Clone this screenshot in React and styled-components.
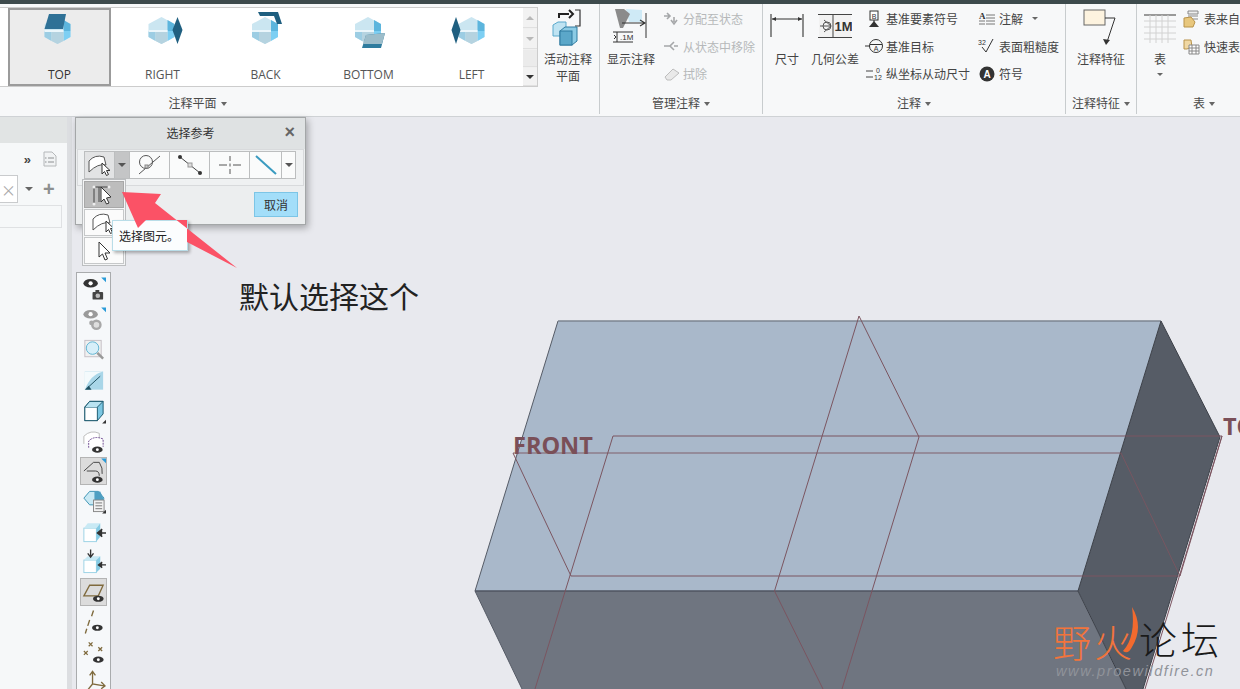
import React from 'react';
import styled, { createGlobalStyle } from 'styled-components';

const GlobalStyle = createGlobalStyle`
  html, body { margin: 0; padding: 0; background: #e8e9ee; }
  body { font-family: "Noto Sans CJK SC", "Open Sans", sans-serif; font-size: 12px; color: #444; }
`;

const Page = styled.div`
  width: 1240px;
  height: 689px;
  overflow: hidden;
  display: flex;
  flex-direction: column;
`;
const TopBar = styled.div`
  height: 4px;
  background: #3d4a4c;
  flex-shrink: 0;
`;
const Ribbon = styled.div`
  height: 112px;
  flex-shrink: 0;
  display: flex;
  background: #f7f8f9;
  border-bottom: 1px solid #cfd2d5;
`;
const Group = styled.div`
  width: ${p => p.$w}px;
  flex-shrink: 0;
  padding-top: 1px;
  margin-bottom: 2px;
  display: flex;
  flex-direction: column;
  box-sizing: border-box;
  border-right: ${p => (p.$last ? 'none' : '1px solid #c8ccce')};
`;
const GroupBody = styled.div`
  height: 88px;
  display: flex;
`;
const GroupLabel = styled.div`
  height: 16px;
  line-height: 16px;
  margin-top: 2px;
  text-align: center;
  padding-right: ${p => p.$pr || 0}px;
  white-space: nowrap;
  font-size: 12px;
  color: #4a4a4a;
  &::after {
    content: '';
    display: inline-block;
    margin-left: 4px;
    vertical-align: 2px;
    border: 3.5px solid transparent;
    border-top: 4px solid #666;
    border-bottom: 0;
  }
`;
const Gallery = styled.div`
  width: 538px;
  height: 80px;
  margin-top: 2px;
  box-sizing: border-box;
  background: #fff;
  border: 1px solid #ccc;
  border-left: 0;
  padding-left: 8px;
  display: flex;
`;
const GalleryItem = styled.div`
  width: 103px;
  flex-shrink: 0;
  box-sizing: border-box;
  display: flex;
  flex-direction: column;
  align-items: center;
  font-family: "Open Sans", sans-serif;
  font-size: 12px;
  color: ${p => (p.$on ? '#333' : '#555')};
  background: ${p => (p.$on ? '#ececec' : 'transparent')};
  border: 2px solid ${p => (p.$on ? '#9b9b9b' : 'transparent')};
  span { margin-top: auto; padding-bottom: 1px; }
`;
const ScrollCol = styled.div`
  width: 14px;
  display: flex;
  flex-direction: column;
  gap: 1px;
  background: #f0f0f0;
`;
const ScrollBtn = styled.div`
  height: ${p => p.$h}px;
  flex-grow: ${p => (p.$grow ? 1 : 0)};
  display: flex;
  align-items: center;
  justify-content: center;
  background: ${p => (p.$grow ? '#ebebeb' : '#f2f2f2')};
  border-bottom: 1px solid #e0e0e0;
`;
const Tri = styled.i`
  width: 0;
  height: 0;
  display: block;
  margin-left: ${p => p.$ml || 0}px;
  margin-top: ${p => p.$mt || 0}px;
  border-left: ${p => p.$s || 4}px solid transparent;
  border-right: ${p => p.$s || 4}px solid transparent;
  border-top: ${p => (p.$up ? 0 : (p.$s || 4) + 'px solid ' + (p.$c || '#666'))};
  border-bottom: ${p => (p.$up ? (p.$s || 4) + 'px solid ' + (p.$c || '#666') : 0)};
`;
const BigButton = styled.div`
  width: ${p => p.$w}px;
  margin-left: ${p => p.$ml || 0}px;
  flex-shrink: 0;
  display: flex;
  flex-direction: column;
  align-items: center;
  text-align: center;
  line-height: 17px;
  padding-top: 2px;
  white-space: nowrap;
`;
const IconBox = styled.div`
  height: 43px;
  box-sizing: border-box;
  padding-top: ${p => p.$pt || 0}px;
  display: flex;
  align-items: flex-start;
  justify-content: center;
`;
const SmallCol = styled.div`
  width: ${p => p.$w}px;
  margin-left: ${p => p.$ml || 0}px;
  flex-shrink: 0;
  display: flex;
  flex-direction: column;
`;
const SmallRow = styled.div`
  height: 27.5px;
  display: flex;
  align-items: center;
  gap: 3px;
  white-space: nowrap;
  color: ${p => (p.$off ? '#b6b8ba' : '#444')};
`;
const RowIcon = styled.svg`
  width: 18px;
  height: 18px;
  flex-shrink: 0;
`;
const Workspace = styled.div`
  flex: 1;
  position: relative;
  display: flex;
  background: #e8e9ee;
  min-height: 0;
`;
const LeftPanel = styled.div`
  width: 67px;
  flex-shrink: 0;
  background: #f6f8f9;
  border-right: 5px solid #dcdee1;
  display: flex;
  flex-direction: column;
`;
const PanelHead = styled.div`
  height: 26px;
  background: #e1e4e4;
`;
const PanelTabs = styled.div`
  height: 32px;
  display: flex;
  align-items: center;
  justify-content: flex-end;
  gap: 12px;
  padding-right: 10px;
  font: bold 13px "Liberation Sans", sans-serif;
`;
const SearchRow = styled.div`
  height: 28px;
  display: flex;
  align-items: center;
`;
const SearchBox = styled.div`
  width: 18px;
  height: 28px;
  box-sizing: border-box;
  background: #fff;
  border: 1px solid #c9cbcd;
  border-left: 0;
  display: flex;
  align-items: center;
  justify-content: center;
  color: #aaa;
  font-size: 15px;
`;
const PlusMark = styled.span`
  margin-left: 10px;
  color: #8d8f90;
  font: bold 20px "Liberation Sans", sans-serif;
  line-height: 1;
`;
const SearchBelow = styled.div`
  width: 62px;
  height: 23px;
  margin-top: 2px;
  box-sizing: border-box;
  border: 1px solid #dfe1e3;
  border-left: 0;
`;
const ToolColumn = styled.div`
  width: 35px;
  margin: 155px 0 0 4px;
  flex-shrink: 0;
  box-sizing: border-box;
  background: #f6f8fa;
  border: 1px solid #a9abad;
  border-bottom: 0;
  padding-top: 2px;
  display: flex;
  flex-direction: column;
  align-items: center;
  position: relative;
  z-index: 1;
`;
const ToolItem = styled.div`
  width: 27px;
  height: ${p => (p.$on ? 28 : 30.2)}px;
  margin: ${p => (p.$on ? '1.1px 0' : 0)};
  box-sizing: border-box;
  flex-shrink: 0;
  display: flex;
  align-items: center;
  justify-content: center;
  background: ${p => (p.$on ? '#dcdcdc' : 'transparent')};
  border: 1px solid ${p => (p.$on ? '#b4b4b4' : 'transparent')};
`;
const ModelLayer = styled.svg`
  position: absolute;
  left: 0;
  top: 0;
  width: 1240px;
  height: 572px;
`;
const DatumLabel = styled.span`
  position: absolute;
  left: ${p => p.$x}px;
  top: ${p => p.$y}px;
  font: bold 23.5px/26px "Open Sans", sans-serif;
  color: #7a4f58;
`;
const Dialog = styled.div`
  position: absolute;
  left: 75px;
  top: 0;
  width: 231px;
  height: 108px;
  box-sizing: border-box;
  background: #eceeef;
  border: 1px solid #a4a7a8;
  box-shadow: 2px 3px 7px rgba(0, 0, 0, 0.3);
  display: flex;
  flex-direction: column;
  z-index: 3;
`;
const DialogHead = styled.div`
  height: 31px;
  flex-shrink: 0;
  box-sizing: border-box;
  padding-bottom: 2px;
  background: #dfe2e3;
  display: flex;
  align-items: center;
  justify-content: center;
  position: relative;
  font-size: 12px;
  color: #333;
  b {
    position: absolute;
    right: 10px;
    top: 4px;
    font: bold 18px/20px "Liberation Sans", sans-serif;
    color: #666;
  }
`;
const SelectBar = styled.div`
  height: 37px;
  flex-shrink: 0;
  margin: 0 1px;
  box-sizing: border-box;
  padding: 1px 0 0 6px;
  background: #eff1f2;
  border: 1px solid #d8dadc;
  display: flex;
`;
const SelectBtn = styled.div`
  width: ${p => p.$w}px;
  height: 28px;
  box-sizing: border-box;
  flex-shrink: 0;
  display: flex;
  align-items: center;
  justify-content: center;
  background: ${p => p.$bg || '#fafbfb'};
  border: 1px solid #bcbebf;
  border-left-width: ${p => (p.$joined ? 0 : 1)}px;
`;
const DialogFoot = styled.div`
  flex: 1;
  display: flex;
  justify-content: flex-end;
  align-items: flex-start;
  padding: 6px 7px 0 0;
`;
const CancelBtn = styled.div`
  width: 44px;
  height: 25px;
  box-sizing: border-box;
  background: #a3def9;
  border: 1px solid #7cc5e6;
  display: flex;
  align-items: center;
  justify-content: center;
  color: #333;
`;
const Flyout = styled.div`
  position: absolute;
  left: 82px;
  top: 62px;
  width: 44px;
  height: 87px;
  box-sizing: border-box;
  padding: 1px;
  background: #f4f5f6;
  border: 1px solid #bcbec0;
  display: flex;
  flex-direction: column;
  gap: 1px;
  z-index: 4;
`;
const FlyoutItem = styled.div`
  height: 27.3px;
  display: flex;
  align-items: center;
  justify-content: center;
  background: ${p => (p.$on ? '#bdbdbd' : '#fbfbfb')};
  border: 1px solid ${p => (p.$on ? '#a8a8a8' : '#c6c8c9')};
  box-sizing: border-box;
`;
const Tooltip = styled.div`
  position: absolute;
  left: 112px;
  top: 103px;
  width: 76px;
  height: 31px;
  box-sizing: border-box;
  padding-left: 6px;
  line-height: 29px;
  background: #fbfdfe;
  border: 1px solid #b9dde8;
  box-shadow: 2px 2px 3px rgba(0, 0, 0, 0.3);
  white-space: nowrap;
  color: #222;
  z-index: 5;
`;
const ArrowLayer = styled.svg`
  position: absolute;
  left: 100px;
  top: 60px;
  width: 150px;
  height: 100px;
  z-index: 6;
`;
const Callout = styled.div`
  position: absolute;
  left: 239px;
  top: 157px;
  font-size: 30px;
  line-height: 42px;
  color: #222;
  white-space: nowrap;
`;
const Watermark = styled.div`
  position: absolute;
  left: 1054px;
  top: 488px;
  width: 180px;
  height: 84px;
  z-index: 2;
`;
const FlameIcon = styled.svg`
  position: absolute;
  left: 60px;
  top: 0;
`;
const MarkText = styled.span`
  position: absolute;
  left: ${p => p.$x}px;
  top: ${p => p.$y}px;
  font: 300 ${p => p.$size}px/${p => p.$size + 4}px "Noto Sans CJK SC", sans-serif;
  letter-spacing: ${p => p.$ls || 0}px;
  color: ${p => p.$c};
  white-space: nowrap;
`;
const MarkUrl = styled.span`
  position: absolute;
  left: 2px;
  top: 57px;
  font: italic 14.5px/18px "Liberation Sans", sans-serif;
  letter-spacing: 1.6px;
  color: #90939a;
  white-space: nowrap;
`;

function Cube({ kind }) {
  const ox = { top: 8.5, right: 9.5, back: 10, bottom: 10, left: 10.5 }[kind];
  return (
    <svg width='48' height='40' viewBox='0 0 48 40'>
      <g transform={`translate(${ox} 0)`}>
        <polygon points='13,7 26,14 26,27 13,34 0,27 0,14' fill='#cbe6f1' />
        <polygon points='19,10 26,14 26,21 19,21' fill='#5cb5dd' />
        <polygon points='19,21 26,21 26,27 19,31' fill='#7dcff3' />
        <polygon points='0,21 7,21 7,31 0,27' fill='#9ccde3' />
        <polygon points='7,22 19,22 19,31 13,34 7,31' fill='#b5d3e0' />
        <rect x='0' y='20' width='19' height='2' fill='#eaf6fb' />
      </g>
      {kind === 'top' && <polygon points='13,4 30,4 27,19 8.5,19' fill='#2f7196' />}
      {kind === 'right' && <polygon points='38.5,7 43.5,20 38.5,34 33.5,20' fill='#1f5f80' />}
      {kind === 'back' && <polygon points='16,2 36,2 40,14 35,14 32,6 18,6' fill='#1f5f80' />}
      {kind === 'bottom' && <polygon points='21,25 40,23 36,38 17,38' fill='#2f7c9e' />}
      {kind === 'bottom' && <polygon points='21,25 40,23 37,34 18,34' fill='#9dbdca' />}
      {kind === 'left' && <polygon points='8,7 12.5,20 8,34 3.5,20' fill='#1f5f80' />}
    </svg>
  );
}

function ActivePlaneIcon() {
  return (
    <svg width='36' height='38' viewBox='0 0 36 38'>
      <path d='M9 9 V5 H19 M19 1 L23 5 L19 9' fill='none' stroke='#222' strokeWidth='2' />
      <path d='M25 1 H30 V17 H25' fill='none' stroke='#333' strokeWidth='1.2' />
      <polygon points='3,16 8,13 16,13 16,27 8,27 3,27' fill='#bfe3f2' stroke='#5aa9cc' />
      <polygon points='10,22 15,18 27,18 27,32 22,36 10,36' fill='#8ccbe4' stroke='#2f7ba0' />
      <rect x='10' y='22' width='12' height='14' fill='#5ba7c9' stroke='#2f7ba0' />
    </svg>
  );
}

function ShowNoteIcon() {
  return (
    <svg width='38' height='36' viewBox='0 0 38 36'>
      <polygon points='14,1 30,2 30,14 17,14' fill='#cfeaf6' />
      <polygon points='3,1 12,1 18,6 11,20 8,20' fill='#8b8b8b' />
      <path d='M10 15 H32 M28 12 L33 15 L28 18' fill='none' stroke='#333' strokeWidth='1.1' />
      <path d='M34 5 V30' stroke='#333' strokeWidth='1' />
      <path d='M1 24 H21 M1 34 H21 M5 24 V34' fill='none' stroke='#333' />
      <path d='M2 27 L4 29 L2 31' fill='none' stroke='#333' />
      <text x='8' y='32' fontSize='8' fill='#333' fontFamily='Liberation Sans'>.1M</text>
    </svg>
  );
}

function DimensionIcon() {
  return (
    <svg width='34' height='24' viewBox='0 0 34 24'>
      <path d='M1 1 V24 M33 1 V24 M2 6 H32' fill='none' stroke='#333' strokeWidth='1.1' />
      <path d='M2 6 L6 4 V8 Z M32 6 L28 4 V8 Z' fill='#333' />
    </svg>
  );
}

function GdtIcon() {
  return (
    <svg width='34' height='26' viewBox='0 0 34 26'>
      <rect x='1' y='2' width='32' height='22' fill='#f2f2f2' />
      <path d='M0 1.5 H34 M0 24.5 H34 M15 2 V24' stroke='#444' />
      <path d='M2 13 H13 M6 7 L13 13 L6 19' fill='none' stroke='#555' />
      <circle cx='9' cy='13' r='4' fill='none' stroke='#555' />
      <text x='16.5' y='18' fontSize='13' fill='#333' fontWeight='bold' fontFamily='Liberation Sans'>1M</text>
    </svg>
  );
}

function FeatureIcon() {
  return (
    <svg width='36' height='38' viewBox='0 0 36 38'>
      <rect x='1' y='1' width='21' height='15' fill='#fdf3df' stroke='#666' />
      <path d='M22 9 H32 L24 33' fill='none' stroke='#333' />
      <path d='M20 30 L23 36 L27 31 Z' fill='#333' />
    </svg>
  );
}

function TableIcon() {
  const v = [6, 12, 18, 24];
  const h = [8, 14, 20, 26];
  return (
    <svg width='32' height='34' viewBox='0 0 32 34'>
      <path d='M0 2 H32' stroke='#999' strokeWidth='2' />
      {h.map(y => <path key={y} d={`M0 ${y} H32`} stroke='#d2d2d2' />)}
      {v.map(x => <path key={x} d={`M${x} 2 V30`} stroke='#d2d2d2' />)}
    </svg>
  );
}

function RowGlyph({ name }) {
  const box = { viewBox: '0 0 18 18' };
  if (name === 'assign' || name === 'remove') {
    return (
      <RowIcon {...box}>
        <path d={name === 'assign' ? 'M2 6 H7 M5 3 L8 6 L5 9 M12 7 V12 M9 10 L12 14 L15 10' : 'M2 9 H8 M16 9 H12 M12 5 L8 9 L12 13'} fill='none' stroke='#a5a7a9' strokeWidth='1.6' />
      </RowIcon>
    );
  }
  if (name === 'erase') {
    return (
      <RowIcon {...box}>
        <polygon points='3,12 11,4 17,8 9,15 5,15' fill='#e9e9e9' stroke='#bdbdbd' />
      </RowIcon>
    );
  }
  if (name === 'datum') {
    return (
      <RowIcon {...box}>
        <rect x='5' y='1' width='8' height='9' fill='#fff' stroke='#333' />
        <text x='9' y='8.5' fontSize='7' textAnchor='middle' fill='#333' fontFamily='Liberation Sans'>B</text>
        <path d='M9 10 V12' stroke='#333' />
        <polygon points='4,17 14,17 9,11' fill='#333' />
      </RowIcon>
    );
  }
  if (name === 'target') {
    return (
      <RowIcon {...box}>
        <path d='M0 9 H5' stroke='#333' />
        <circle cx='11' cy='9' r='6.5' fill='none' stroke='#333' />
        <path d='M5 7.5 H17' stroke='#333' />
        <text x='11' y='14' fontSize='7' textAnchor='middle' fill='#333' fontFamily='Liberation Sans'>A</text>
      </RowIcon>
    );
  }
  if (name === 'ordinate') {
    return (
      <RowIcon {...box}>
        <path d='M1 6 H8 M1 12 H8' stroke='#444' />
        <text x='13' y='8' fontSize='7' textAnchor='middle' fill='#333' fontFamily='Liberation Sans'>0</text>
        <text x='13' y='15' fontSize='7' textAnchor='middle' fill='#333' fontFamily='Liberation Sans'>12</text>
      </RowIcon>
    );
  }
  if (name === 'note') {
    return (
      <RowIcon {...box}>
        <text x='1' y='9' fontSize='9' fill='#333' fontWeight='bold' fontFamily='Liberation Serif'>A</text>
        <path d='M8 5 H17 M8 8 H17 M8 11 H17 M8 14 H17 M1 11 H7 M1 14 H7' stroke='#777' />
      </RowIcon>
    );
  }
  if (name === 'rough') {
    return (
      <RowIcon {...box}>
        <text x='0' y='8' fontSize='7' fill='#333' fontFamily='Liberation Sans'>32</text>
        <path d='M4 10 L8 15 L15 2' fill='none' stroke='#333' />
      </RowIcon>
    );
  }
  if (name === 'symbol') {
    return (
      <RowIcon {...box}>
        <circle cx='9' cy='9' r='7.5' fill='#333' />
        <text x='9' y='13' fontSize='10' textAnchor='middle' fill='#fff' fontWeight='bold' fontFamily='Liberation Sans'>A</text>
      </RowIcon>
    );
  }
  if (name === 'fromfile') {
    return (
      <RowIcon {...box}>
        <path d='M5 1 H15 V4 H5 Z M5 6 H15 M5 9 H15' fill='#eee' stroke='#888' />
        <polygon points='1,8 8,7 12,12 10,17 1,17' fill='#e8c77d' stroke='#b8934a' />
      </RowIcon>
    );
  }
  return (
    <RowIcon {...box}>
      <polygon points='1,3 8,3 9,10 4,12 1,12' fill='#f0d8a4' stroke='#b8934a' />
      <path d='M6 8 H16 V17 H6 Z M6 11 H16 M6 14 H16 M9 8 V17 M13 8 V17' fill='#fff' stroke='#888' />
    </RowIcon>
  );
}

function Eye({ x, y, c = '#333', big }) {
  return (
    <g transform={`translate(${x} ${y})`}>
      <ellipse cx='0' cy='0' rx={big ? 7.5 : 5.5} ry={big ? 4.5 : 3.2} fill={c} />
      <circle cx='0' cy='0' r={big ? 2.2 : 1.5} fill='#fff' />
    </g>
  );
}

function ToolGlyph({ name }) {
  return (
    <svg width='26' height='26' viewBox='0 0 26 26'>
      {name === 'viewA' && (
        <>
          <path d='M21 0 H26 V5 Z' fill='#2a9bd8' />
          <Eye x={10} y={6} c='#333' big />
          <rect x='12' y='15' width='11' height='8' rx='1' fill='#444' />
          <circle cx='17.5' cy='19' r='2.4' fill='#bbb' />
          <rect x='15' y='13' width='4' height='3' fill='#444' />
        </>
      )}
      {name === 'viewB' && (
        <>
          <path d='M21 0 H26 V5 Z' fill='#2a9bd8' />
          <Eye x={10} y={7} c='#9a9a9a' big />
          <circle cx='16' cy='18' r='5.5' fill='#a8a8a8' />
          <circle cx='16' cy='18' r='3' fill='#dedede' />
          <circle cx='11' cy='16' r='2.5' fill='#a8a8a8' />
        </>
      )}
      {name === 'zoom' && (
        <>
          <rect x='4' y='3' width='17' height='17' fill='#f0f0f0' stroke='#c5bfc5' />
          <circle cx='12' cy='11' r='6.5' fill='#d7eff9' stroke='#5fb4d2' />
          <path d='M17 16 L23 22' stroke='#999' strokeWidth='2.6' />
        </>
      )}
      {name === 'slope' && (
        <>
          <rect x='4' y='3' width='19' height='19' fill='#a9d6e8' />
          <path d='M4 22 V3 H23 Q10 6 4 22 Z' fill='#f4fafc' />
          <path d='M8 19 L20 8' stroke='#1d4f60' strokeWidth='1' />
          <polygon points='4,22 11,22 8,18' fill='#1d4f60' />
        </>
      )}
      {name === 'cube' && (
        <>
          <polygon points='4,9 9,3 23,3 23,16 17,23 4,23' fill='#7cc7e2' stroke='#1c5a6e' />
          <rect x='4' y='9' width='13' height='14' fill='#fff' stroke='#1c5a6e' />
          <path d='M4 9 L9 3 H23 L17 9' fill='#b9e3f1' stroke='#1c5a6e' />
          <path d='M26 22 V26 H22 Z' fill='#333' />
        </>
      )}
      {name === 'section' && (
        <>
          <path d='M3 16 V8 Q10 1 19 5 V10' fill='#fff' stroke='#bbb' />
          <path d='M8 20 V13 Q14 7 23 11 V19' fill='#fff' stroke='#6d4a92' strokeDasharray='2 1' />
          <Eye x={17} y={22} />
        </>
      )}
      {name === 'sectionOn' && (
        <>
          <path d='M21 0 H26 V5 Z' fill='#2a9bd8' />
          <path d='M3 13 L13 4 H19 Q23 10 22 16 M6 13 H15 Q19 13 19 18' fill='none' stroke='#444' />
          <Eye x={17} y={22} />
        </>
      )}
      {name === 'cubeNote' && (
        <>
          <polygon points='3,10 9,3 18,3 24,10 18,17 9,17' fill='#c9e9f4' stroke='#3d93b3' />
          <path d='M14 3 L20 3 L24 12 H14 Z' fill='#4e9fc2' />
          <rect x='13' y='12' width='11' height='12' fill='#f2f2f2' stroke='#888' />
          <path d='M15 15 H22 M15 18 H22 M15 21 H22' stroke='#777' />
          <path d='M26 22 V26 H22 Z' fill='#333' />
        </>
      )}
      {name === 'cubeLeft' && (
        <>
          <rect x='3' y='9' width='13' height='14' fill='#fff' stroke='#9bd2e5' />
          <polygon points='3,9 7,4 20,4 16,9' fill='#c8e9f4' />
          <polygon points='16,9 20,4 20,18 16,23' fill='#86cbe4' />
          <path d='M26 14 H18 M22 10 L17 14 L22 18' fill='#333' stroke='#333' strokeWidth='1.4' />
        </>
      )}
      {name === 'cubeDown' && (
        <>
          <rect x='3' y='11' width='13' height='13' fill='#fff' stroke='#9bd2e5' />
          <polygon points='3,11 7,7 20,7 16,11' fill='#c8e9f4' />
          <polygon points='16,11 20,7 20,20 16,24' fill='#86cbe4' />
          <path d='M10 0 V7 M7 4 L10 8 L13 4' fill='none' stroke='#333' strokeWidth='1.4' />
          <path d='M26 16 H19 M22 13 L18 16 L22 19' fill='#333' stroke='#333' strokeWidth='1.2' />
        </>
      )}
      {name === 'plane' && (
        <>
          <polygon points='3,17 9,6 23,6 18,17' fill='none' stroke='#7f6a3d' strokeWidth='1.4' />
          <Eye x={18} y={20} />
        </>
      )}
      {name === 'axis' && (
        <>
          <path d='M13 1 L11 7 M9 11 L7 17 M6 20 L4.5 25' stroke='#7f6a3d' strokeWidth='1.4' />
          <Eye x={17} y={19} />
        </>
      )}
      {name === 'points' && (
        <>
          <path d='M8 3 L12 7 M12 3 L8 7 M18 8 L22 12 M22 8 L18 12 M3 12 L7 16 M7 12 L3 16' stroke='#7f6a3d' strokeWidth='1.3' />
          <Eye x={18} y={21} />
        </>
      )}
      {name === 'csys' && (
        <>
          <path d='M12 2 V14 L24 16 M12 14 L4 24 M9 5 L12 1 L15 5 M21 12 L25 16 L21 19' fill='none' stroke='#7f6a3d' strokeWidth='1.4' />
          <Eye x={18} y={24} />
        </>
      )}
    </svg>
  );
}

function DialogSurf({ hand = true }) {
  return (
    <svg width='24' height='22' viewBox='0 0 24 22'>
      <path d='M1 18 V7 Q7 0 16 3 L18 11 Q10 9 1 18 Z' fill='#fff' stroke='#555' />
      {hand && <path d='M14 9 V20 L16.5 17.5 L18.5 21.5 L20.5 20.5 L18.5 16.5 L22 16.5 Z' fill='#fff' stroke='#333' />}
    </svg>
  );
}

function Pointer() {
  return (
    <svg width='16' height='20' viewBox='0 0 16 20'>
      <path d='M3 1 V16 L6.5 13 L9 19 L11.5 18 L9 12 L14 12 Z' fill='#fff' stroke='#333' />
    </svg>
  );
}

const tools = ['viewA', 'viewB', 'zoom', 'slope', 'cube', 'section', 'sectionOn', 'cubeNote', 'cubeLeft', 'cubeDown', 'plane', 'axis', 'points', 'csys'];
const active = ['sectionOn', 'plane'];
const planes = [['top', 'TOP'], ['right', 'RIGHT'], ['back', 'BACK'], ['bottom', 'BOTTOM'], ['left', 'LEFT']];

function Model() {
  return (
    <ModelLayer viewBox='0 117 1240 572'>
      <polygon points='558,321 1161,321 1078,591 475,591' fill='#a9b8ca' />
      <polygon points='1161,321 1220,437 1143,689 1126,689 1078,591' fill='#565c66' />
      <polygon points='475,591 1078,591 1126,689 522,689' fill='#6f7580' />
      <polyline points='558,321 475,591 522,689' fill='none' stroke='#555b66' />
      <path d='M558 321 H1161' stroke='#7d8490' strokeWidth='1.5' />
      <path d='M475 591 H1078' stroke='#4f5560' strokeWidth='1.5' />
      <polyline points='1161,321 1078,591 1126,689' fill='none' stroke='#3c4048' />
      <polyline points='1161,321 1220,437 1143,689' fill='none' stroke='#3c4048' />
      <g fill='none' stroke='#7b5560' strokeWidth='1'>
        <polyline points='823,689 774.5,591 859,316 919,437 842,689' />
        <polyline points='513,453 1121,453 1180,576' opacity='0.9' />
        <polyline points='513,453 571,576 1180,576' />
        <polyline points='535,689 613,436 1222,436 1145,689' />
        <path d='M1222 436 L1180 576' />
      </g>
    </ModelLayer>
  );
}

export default function App() {
  return (
    <Page>
      <GlobalStyle />
      <TopBar />
      <Ribbon>
        <Group $w={600}>
          <GroupBody>
            <Gallery>
              {planes.map(([kind, text], i) => (
                <GalleryItem key={kind} $on={i === 0}>
                  <Cube kind={kind} />
                  <span>{text}</span>
                </GalleryItem>
              ))}
              <ScrollCol>
                <ScrollBtn $h={19}><Tri $up $s={4} $c='#b8b8b8' /></ScrollBtn>
                <ScrollBtn $h={19}><Tri $s={4} $c='#b8b8b8' /></ScrollBtn>
                <ScrollBtn $grow />
                <ScrollBtn $h={17}><Tri $s={4} $c='#333' /></ScrollBtn>
              </ScrollCol>
            </Gallery>
            <BigButton $w={60}>
              <IconBox $pt={2}><ActivePlaneIcon /></IconBox>
              活动注释<br />平面
            </BigButton>
          </GroupBody>
          <GroupLabel $pr={204}>注释平面</GroupLabel>
        </Group>
        <Group $w={163}>
          <GroupBody>
            <BigButton $w={54} $ml={4}>
              <IconBox $pt={1}><ShowNoteIcon /></IconBox>
              显示注释
            </BigButton>
            <SmallCol $w={100} $ml={4}>
              <SmallRow $off><RowGlyph name='assign' />分配至状态</SmallRow>
              <SmallRow $off><RowGlyph name='remove' />从状态中移除</SmallRow>
              <SmallRow $off><RowGlyph name='erase' />拭除</SmallRow>
            </SmallCol>
          </GroupBody>
          <GroupLabel>管理注释</GroupLabel>
        </Group>
        <Group $w={303}>
          <GroupBody>
            <BigButton $w={48}>
              <IconBox $pt={6}><DimensionIcon /></IconBox>
              尺寸
            </BigButton>
            <BigButton $w={48}>
              <IconBox $pt={6}><GdtIcon /></IconBox>
              几何公差
            </BigButton>
            <SmallCol $w={113} $ml={6}>
              <SmallRow><RowGlyph name='datum' />基准要素符号</SmallRow>
              <SmallRow><RowGlyph name='target' />基准目标</SmallRow>
              <SmallRow><RowGlyph name='ordinate' />纵坐标从动尺寸</SmallRow>
            </SmallCol>
            <SmallCol $w={84}>
              <SmallRow><RowGlyph name='note' />注解<Tri $s={3.5} $ml={6} /></SmallRow>
              <SmallRow><RowGlyph name='rough' />表面粗糙度</SmallRow>
              <SmallRow><RowGlyph name='symbol' />符号</SmallRow>
            </SmallCol>
          </GroupBody>
          <GroupLabel>注释</GroupLabel>
        </Group>
        <Group $w={71}>
          <GroupBody>
            <BigButton $w={70}>
              <IconBox $pt={2}><FeatureIcon /></IconBox>
              注释特征
            </BigButton>
          </GroupBody>
          <GroupLabel>注释特征</GroupLabel>
        </Group>
        <Group $w={134} $last>
          <GroupBody>
            <BigButton $w={46}>
              <IconBox $pt={6}><TableIcon /></IconBox>
              表
              <Tri $s={3.5} $mt={6} />
            </BigButton>
            <SmallCol $w={88}>
              <SmallRow><RowGlyph name='fromfile' />表来自文件</SmallRow>
              <SmallRow><RowGlyph name='quick' />快速表</SmallRow>
            </SmallCol>
          </GroupBody>
          <GroupLabel>表</GroupLabel>
        </Group>
      </Ribbon>
      <Workspace>
        <Model />
        <LeftPanel>
          <PanelHead />
          <PanelTabs>
            <span>»</span>
            <svg width='14' height='17' viewBox='0 0 14 17'>
              <path d='M1 1 H9 L13 5 V15 H1 Z' fill='#f1f3f4' stroke='#b5b8ba' />
              <path d='M5 7 H11 M5 11 H11 M2 7 H3.5 M2 11 H3.5' stroke='#8d9092' />
            </svg>
          </PanelTabs>
          <SearchRow>
            <SearchBox>×</SearchBox>
            <Tri $s={4} $ml={7} />
            <PlusMark>+</PlusMark>
          </SearchRow>
          <SearchBelow />
        </LeftPanel>
        <ToolColumn>
          {tools.map(t => (
            <ToolItem key={t} $on={active.includes(t)}><ToolGlyph name={t} /></ToolItem>
          ))}
        </ToolColumn>
        <DatumLabel $x={513} $y={315}>FRONT</DatumLabel>
        <DatumLabel $x={1223} $y={296}>TOP</DatumLabel>
        <Watermark>
          <FlameIcon width='30' height='60' viewBox='0 0 30 60'>
            <path d='M18 2 Q30 22 18 42 Q14 50 9 46 Q22 32 18 2 Z' fill='#f26a2e' />
          </FlameIcon>
          <MarkText $x={-1} $y={15} $size={38} $c='#f2743c'>野</MarkText>
          <MarkText $x={40} $y={15} $size={38} $c='#f2743c'>火</MarkText>
          <MarkText $x={85} $y={12} $size={38} $ls={4} $c='#1a1a1a'>论坛</MarkText>
          <MarkUrl>www.proewildfire.cn</MarkUrl>
        </Watermark>
        <Dialog>
          <DialogHead>
            选择参考
            <b>×</b>
          </DialogHead>
          <SelectBar>
            <SelectBtn $w={31} $bg='#e2e3e4'><DialogSurf /></SelectBtn>
            <SelectBtn $w={15} $bg='#c4c5c6' $joined><Tri $s={4} $c='#555' /></SelectBtn>
            <SelectBtn $w={40} $joined>
              <svg width='28' height='22' viewBox='0 0 28 22'>
                <circle cx='10' cy='8' r='6.5' fill='none' stroke='#555' />
                <path d='M3 20 L24 2' stroke='#555' />
                <rect x='9' y='11' width='3' height='3' fill='#ccc' stroke='#888' />
              </svg>
            </SelectBtn>
            <SelectBtn $w={40} $joined>
              <svg width='26' height='22' viewBox='0 0 26 22'>
                <path d='M3 3 L23 19' stroke='#444' />
                <circle cx='3' cy='3' r='2' fill='#333' />
                <circle cx='23' cy='19' r='2' fill='#333' />
                <rect x='11' y='9' width='4' height='4' fill='#ddd' stroke='#999' />
              </svg>
            </SelectBtn>
            <SelectBtn $w={40} $joined>
              <svg width='26' height='22' viewBox='0 0 26 22'>
                <path d='M2 11 H10 M16 11 H24 M13 2 V7 M13 9.5 V12.5 M13 15 V20' stroke='#555' />
              </svg>
            </SelectBtn>
            <SelectBtn $w={32} $joined>
              <svg width='26' height='22' viewBox='0 0 26 22'>
                <path d='M3 2 L23 20' stroke='#3a9bc0' strokeWidth='2' />
              </svg>
            </SelectBtn>
            <SelectBtn $w={14} $joined><Tri $s={4} $c='#555' /></SelectBtn>
          </SelectBar>
          <DialogFoot>
            <CancelBtn>取消</CancelBtn>
          </DialogFoot>
        </Dialog>
        <Flyout>
          <FlyoutItem $on>
            <svg width='26' height='22' viewBox='0 0 26 22'>
              <path d='M3 3 H18 M3 3 V20 M8 3 V18' fill='none' stroke='#444' />
              <circle cx='3' cy='3' r='1.5' fill='#eee' />
              <circle cx='18' cy='3' r='1.5' fill='#eee' />
              <circle cx='3' cy='20' r='1.5' fill='#eee' />
              <path d='M10 3 V18 L13 15 L15.5 20 L18 19 L15.5 14 L20 13 Z' fill='#fff' stroke='#333' />
            </svg>
          </FlyoutItem>
          <FlyoutItem><DialogSurf /></FlyoutItem>
          <FlyoutItem><Pointer /></FlyoutItem>
        </Flyout>
        <Tooltip>选择图元。</Tooltip>
        <ArrowLayer viewBox='100 177 150 100'>
          <polygon points='122,192 161,194 155,203 237,268 187,242 187,220 146,220 138,228' fill='#fb5266' />
        </ArrowLayer>
        <Callout>默认选择这个</Callout>
      </Workspace>
    </Page>
  );
}
